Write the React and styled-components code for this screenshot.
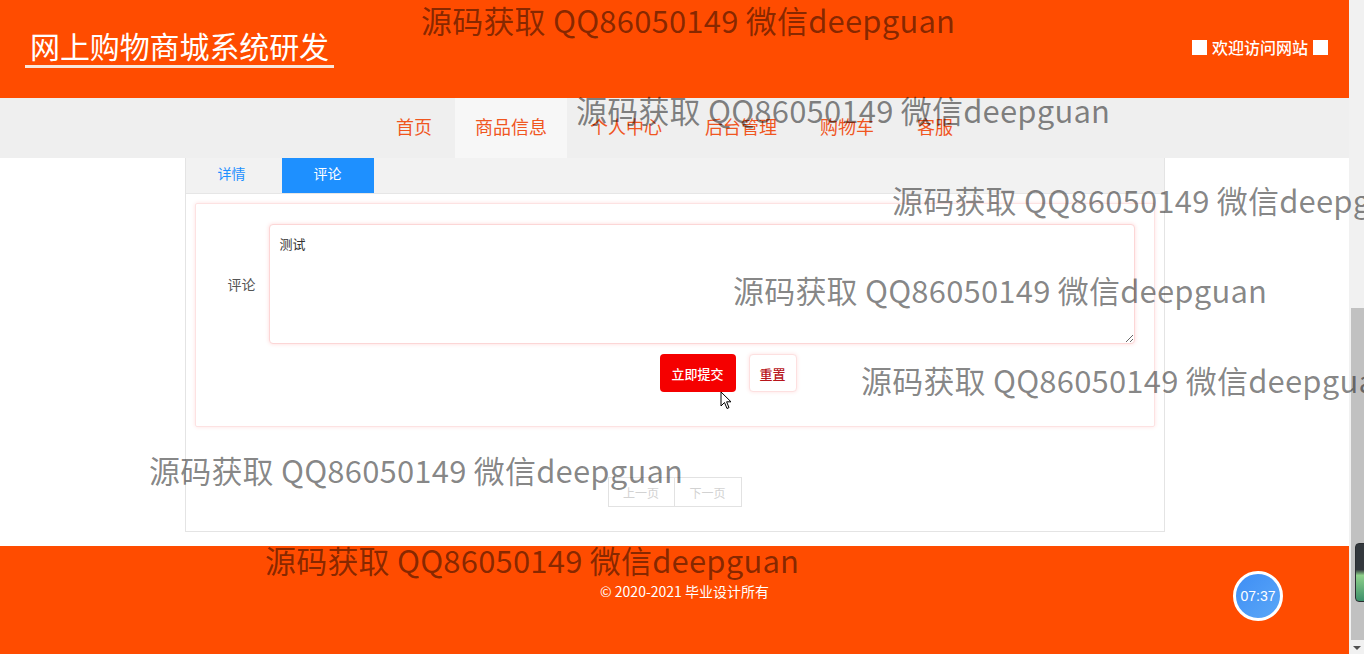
import React from "react";
import styled, { createGlobalStyle } from "styled-components";

const GlobalStyle = createGlobalStyle`
  html, body {
    margin: 0;
    padding: 0;
    overflow: hidden;
    background: #fff;
    font-family: "Noto Sans CJK SC", "Liberation Sans", sans-serif;
  }
`;

const ORANGE = "#ff4c00";

const navItems = ["首页", "商品信息", "个人中心", "后台管理", "购物车", "客服"];

const marks = [
  { x: 421, y: 4 },
  { x: 576, y: 94 },
  { x: 892, y: 184 },
  { x: 733, y: 274 },
  { x: 861, y: 364 },
  { x: 149, y: 454 },
  { x: 265, y: 544 },
];

function App() {
  return (
    <Shell>
      <GlobalStyle />
      <Main>
        <Header>
          <Title>网上购物商城系统研发</Title>
          <Welcome>
            <Square />
            欢迎访问网站
            <Square />
          </Welcome>
        </Header>
        <Nav>
          {navItems.map((item, index) => (
            <NavItem key={index} active={index === 1}>
              {item}
            </NavItem>
          ))}
        </Nav>
        <Content>
          <Panel>
            <Tabs>
              <Tab>详情</Tab>
              <Tab active>评论</Tab>
            </Tabs>
            <Card>
              <FormRow>
                <Label>评论</Label>
                <TextArea defaultValue="测试" />
              </FormRow>
              <Buttons>
                <SubmitButton>立即提交</SubmitButton>
                <ResetButton>重置</ResetButton>
                <Cursor viewBox="0 0 12 19" width="12" height="19">
                  <path
                    d="M1 1 L1 15 L4.5 11.5 L7 17.5 L9 16.6 L6.6 10.8 L11 10.8 Z"
                    fill="#fff"
                    stroke="#000"
                    strokeWidth="1"
                    strokeLinejoin="round"
                  />
                </Cursor>
              </Buttons>
            </Card>
            <Pager>
              <PageButton>上一页</PageButton>
              <PageButton>下一页</PageButton>
            </Pager>
          </Panel>
        </Content>
        <Footer>
          © 2020-2021 毕业设计所有
          <Clock>07:37</Clock>
        </Footer>
      </Main>
      <ScrollBar>
        <Thumb />
        <Arrow />
        <Widget />
      </ScrollBar>
      <Watermarks>
        {marks.map((m, i) => (
          <Mark key={i} style={{ left: m.x, top: m.y }}>
            源码获取 QQ86050149 微信deepguan
          </Mark>
        ))}
      </Watermarks>
    </Shell>
  );
}

export default App;

const Shell = styled.div`
  position: relative;
  display: flex;
  width: 1364px;
  height: 654px;
  overflow: hidden;
`;

const Main = styled.div`
  flex: 1;
  display: flex;
  flex-direction: column;
  min-width: 0;
`;

const Header = styled.div`
  height: 98px;
  background: ${ORANGE};
  display: flex;
  align-items: center;
  justify-content: space-between;
  padding: 0 21px 0 25px;
  box-sizing: border-box;
`;

const Title = styled.div`
  color: #fff;
  font-size: 30px;
  line-height: 36px;
  padding: 0 5px 2px;
  border-bottom: 3px solid #f8e6da;
  margin-bottom: 3px;
  letter-spacing: -0.1px;
`;

const Welcome = styled.div`
  display: flex;
  align-items: center;
  gap: 5px;
  color: #fff;
  font-size: 16px;
  font-weight: 500;
  margin-bottom: 4px;
`;

const Square = styled.span`
  display: inline-block;
  width: 15px;
  height: 15px;
  background: #fff;
`;

const Nav = styled.div`
  height: 60px;
  background: #efefef;
  display: flex;
  justify-content: center;
  gap: 3px;
`;

const NavItem = styled.a`
  display: flex;
  align-items: center;
  padding: 0 20px 4px;
  font-size: 18px;
  color: #f0561f;
  background: ${(props) => (props.active ? "#f7f7f7" : "transparent")};
  cursor: pointer;
`;

const Content = styled.div`
  flex: 1;
  display: flex;
  justify-content: center;
  align-items: flex-start;
`;

const Panel = styled.div`
  width: 980px;
  box-sizing: border-box;
  border: 1px solid #e4e4e4;
  border-top: none;
  padding-bottom: 24px;
`;

const Tabs = styled.div`
  height: 35px;
  background: #f2f2f2;
  border-bottom: 1px solid #e6e6e6;
  display: flex;
  gap: 4px;
`;

const Tab = styled.div`
  width: 92px;
  display: flex;
  align-items: center;
  justify-content: center;
  font-size: 14px;
  color: ${(props) => (props.active ? "#fff" : "#1e90ff")};
  background: ${(props) => (props.active ? "#1e90ff" : "transparent")};
  padding-bottom: 6px;
  box-sizing: border-box;
`;

const Card = styled.div`
  margin: 9px 9px 0;
  border: 1px solid #fde2e2;
  border-radius: 2px;
  box-shadow: 0 0 4px rgba(255, 0, 0, 0.12);
  padding: 20px 19px 34px 0;
`;

const FormRow = styled.div`
  display: flex;
  align-items: center;
  gap: 13px;
`;

const Label = styled.div`
  width: 60px;
  text-align: right;
  font-size: 14px;
  color: #555;
`;

const TextArea = styled.textarea`
  flex: 1;
  height: 120px;
  box-sizing: border-box;
  border: 1px solid #fcd6d6;
  border-radius: 4px;
  box-shadow: 0 0 4px rgba(255, 0, 0, 0.15);
  padding: 9px 10px;
  font-family: "Noto Sans CJK SC", "Liberation Sans", sans-serif;
  font-size: 13px;
  color: #333;
  outline: none;
`;

const Buttons = styled.div`
  position: relative;
  display: flex;
  gap: 13px;
  padding-left: 464px;
  margin-top: 10px;
`;

const SubmitButton = styled.button`
  height: 38px;
  width: 76px;
  border: none;
  border-radius: 4px;
  background: #f50000;
  color: #fff;
  font-family: inherit;
  font-size: 13px;
  font-weight: 500;
  padding: 0;
`;

const ResetButton = styled.button`
  height: 38px;
  width: 48px;
  border: 1px solid #fde0e0;
  border-radius: 4px;
  background: #fff;
  box-shadow: 0 0 4px rgba(255, 0, 0, 0.12);
  color: #b8151b;
  font-family: inherit;
  font-size: 13px;
  font-weight: 500;
  padding: 0;
`;

const Cursor = styled.svg`
  position: absolute;
  left: 524px;
  top: 37px;
`;

const Pager = styled.div`
  display: flex;
  justify-content: center;
  margin-top: 50px;
`;

const PageButton = styled.div`
  width: 67px;
  height: 30px;
  box-sizing: border-box;
  border: 1px solid #e2e2e2;
  display: flex;
  align-items: center;
  justify-content: center;
  font-size: 12px;
  color: #d2d2d2;
  & + & {
    border-left: none;
  }
`;

const Footer = styled.div`
  position: relative;
  height: 108px;
  background: ${ORANGE};
  color: #fff;
  font-size: 14px;
  text-align: center;
  padding: 35px 0 0 20px;
  box-sizing: border-box;
`;

const Clock = styled.div`
  position: absolute;
  left: 1233px;
  top: 25px;
  width: 50px;
  height: 50px;
  box-sizing: border-box;
  border: 3px solid #fff;
  border-radius: 50%;
  background: linear-gradient(135deg, #3f8ef5, #5aa7f7);
  color: #fff;
  font-family: "Liberation Sans", sans-serif;
  font-size: 14px;
  display: flex;
  align-items: center;
  justify-content: center;
`;

const ScrollBar = styled.div`
  position: relative;
  width: 15px;
  background: #f1f1f1;
`;

const Thumb = styled.div`
  position: absolute;
  left: 2px;
  right: 0;
  top: 308px;
  height: 332px;
  background: #c1c1c1;
`;

const Arrow = styled.div`
  position: absolute;
  left: 4px;
  bottom: 4px;
  width: 0;
  height: 0;
  border-left: 4px solid transparent;
  border-right: 4px solid transparent;
  border-top: 4px solid #505050;
`;

const Widget = styled.div`
  position: absolute;
  left: 6px;
  top: 543px;
  width: 12px;
  height: 57px;
  border-radius: 4px;
  background: linear-gradient(180deg, #33383d 0%, #33383d 45%, #8fd18b 55%, #3c8f6a 100%);
  border: 1px solid #2a2d30;
`;

const Watermarks = styled.div`
  position: absolute;
  inset: 0;
  pointer-events: none;
`;

const Mark = styled.div`
  position: absolute;
  white-space: nowrap;
  font-size: 31px;
  line-height: 31px;
  letter-spacing: 0.2px;
  color: rgba(0, 0, 0, 0.48);
`;
